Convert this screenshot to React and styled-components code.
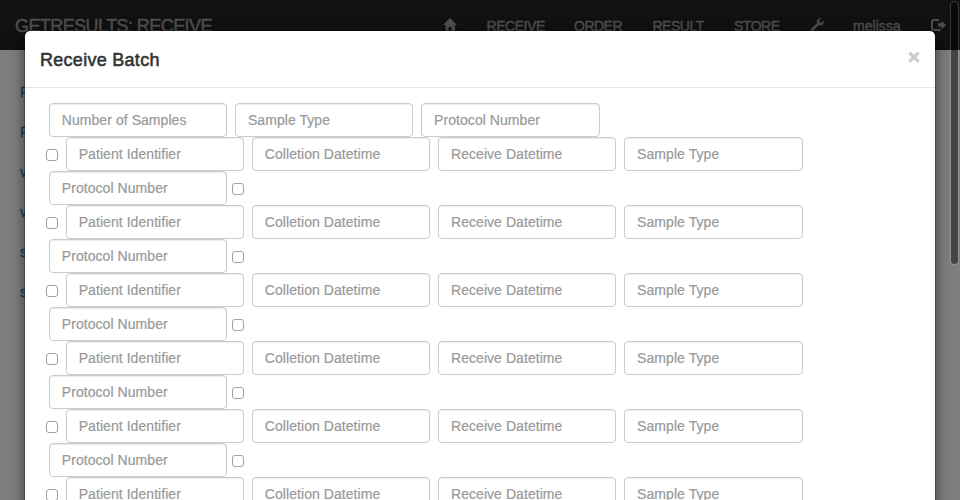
import React from "react";
import styled, { createGlobalStyle } from "styled-components";

const GlobalStyle = createGlobalStyle`
  *, *::before, *::after { box-sizing: border-box; }
  html, body { margin: 0; height: 500px; overflow: hidden; background: #fff; }
  body { font: 14px/20px "Liberation Sans", Arial, sans-serif; color: #333; }
`;

const Page = styled.div`
  position: relative;
  width: 960px;
  height: 500px;
  overflow: hidden;
`;

const Navbar = styled.nav`
  display: flex;
  justify-content: space-between;
  height: 50px;
  padding: 0 14px 0 15px;
  background: #222;
  color: #9d9d9d;
`;

const Brand = styled.span`
  padding: 16px 0 14px;
  font-size: 18px;
  letter-spacing: -0.57px;
  white-space: nowrap;
  -webkit-text-stroke: 0.45px currentColor;
`;

const NavList = styled.ul`
  display: flex;
  gap: 30px;
  margin: 0;
  padding: 0;
  list-style: none;
`;

const NavItem = styled.li`
  flex: none;
  width: ${(p) => p.$width}px;
  padding: 16px 0 14px;
  letter-spacing: ${(p) => p.$tracking || 0}px;
  white-space: nowrap;
  -webkit-text-stroke: 0.4px currentColor;

  svg {
    display: block;
    margin-top: 2px;
    overflow: visible;
  }
`;

const LinkList = styled.div`
  display: flex;
  flex-direction: column;
  gap: 20px;
  padding: 32px 20px;
  color: #337ab7;
`;

const SideLink = styled.span`
  height: 20px;
  -webkit-text-stroke: 0.4px currentColor;
`;

const Backdrop = styled.div`
  position: absolute;
  inset: 0;
  background: rgba(0, 0, 0, 0.5);
`;

const Dialog = styled.section`
  position: absolute;
  top: 30px;
  left: 24px;
  width: 912px;
  height: 900px;
  border: 1px solid rgba(0, 0, 0, 0.2);
  border-radius: 6px;
  background: #fff;
  background-clip: padding-box;
  box-shadow: 0 5px 15px rgba(0, 0, 0, 0.5);
`;

const DialogHeader = styled.header`
  display: flex;
  align-items: flex-start;
  justify-content: space-between;
  height: 57px;
  padding: 16px 15px 15px;
  border-bottom: 1px solid #e5e5e5;
`;

const Title = styled.h4`
  margin: 0;
  font-size: 18px;
  font-weight: 400;
  line-height: 26px;
  letter-spacing: 0.28px;
  -webkit-text-stroke: 0.55px currentColor;
`;

const CloseButton = styled.button`
  margin: -1px 0 0;
  padding: 0;
  border: 0;
  background: none;
  color: #000;
  font: bold 21px/21px "Liberation Sans", Arial, sans-serif;
  -webkit-text-stroke: 0.7px currentColor;
  opacity: 0.2;
`;

const DialogBody = styled.div`
  padding: 15px 15px 15px 21px;
`;

const FieldRow = styled.div`
  display: flex;
  gap: 8px;
  height: 34px;
  padding-left: ${(p) => (p.$indent ? 3.1 : 0)}px;
`;

const Input = styled.input`
  flex: none;
  width: 178.15px;
  height: 34px;
  margin: 0;
  padding: 6px 12px 6px 11.7px;
  border: 1px solid #ccc;
  border-radius: 4px;
  background: #fff;
  box-shadow: inset 0 1px 1px rgba(0, 0, 0, 0.075);
  font: 14px/20px "Liberation Sans", Arial, sans-serif;
  letter-spacing: 0.06px;
  color: #555;

  &::placeholder {
    color: #999;
    opacity: 1;
    -webkit-text-stroke: 0.2px currentColor;
  }
`;

const Checkbox = styled.input.attrs({ type: "checkbox" })`
  appearance: none;
  flex: none;
  width: 12px;
  height: 12px;
  margin: 12px 0 0 ${(p) => (p.$trailing ? -3 : 0)}px;
  border: 1px solid #a0a0a0;
  border-radius: 3px;
  background: #fff;
`;

const ScrollThumb = styled.div`
  position: absolute;
  top: 1px;
  left: 950px;
  width: 9px;
  height: 264px;
  border: 1px solid rgba(255, 255, 255, 0.16);
  border-radius: 5px;
  background: rgba(0, 0, 0, 0.46);
  background-clip: padding-box;
`;

const HomeIcon = () => (
  <svg width="14" height="14" viewBox="0 0 14 14" fill="currentColor">
    <path d="M7 0 14 7H12v5.5a.5.5 0 0 1-.5.5H8.5V9h-3v4H3a.5.5 0 0 1-.5-.5V7H0Z" />
  </svg>
);

const WrenchIcon = () => (
  <svg width="14" height="14" viewBox="0 0 14 14" fill="currentColor">
    <path d="M11.3.3 9.2 2.4l.4 2 2 .4 2.1-2.1c.7 2.5-1 4.6-3.4 4.6-.6 0-1.1-.1-1.6-.3l-5.9 6.3a1.5 1.5 0 0 1-2.1-2.1l6.3-5.9C6.1 2.7 8 0 11.3.3Z" />
  </svg>
);

const LogoutIcon = () => (
  <svg width="15" height="14" viewBox="0 0 15 14" fill="currentColor">
    <path d="M8 1H3a3 3 0 0 0-3 3v6a3 3 0 0 0 3 3h6.5v-2H3.2A1.2 1.2 0 0 1 2 9.8V4.2A1.2 1.2 0 0 1 3.2 3H8Z" />
    <path d="m10.5 2.7 4.5 4.3-4.5 4.3V8.6H7V5.3h3.5Z" />
  </svg>
);

const navigation = [
  { key: "home", content: <HomeIcon />, width: 13.5 },
  { key: "receive", content: "RECEIVE", width: 57.5, tracking: -0.45 },
  { key: "order", content: "ORDER", width: 48.5, tracking: -0.5 },
  { key: "result", content: "RESULT", width: 51.5, tracking: -0.5 },
  { key: "store", content: "STORE", width: 46, tracking: -0.5 },
  { key: "tools", content: <WrenchIcon />, width: 13 },
  { key: "user", content: "melissa", width: 48, tracking: 0.05 },
  { key: "logout", content: <LogoutIcon />, width: 15 },
];

const sideLinks = ["P", "P", "v", "v", "s", "s"];
const batchFields = ["Number of Samples", "Sample Type", "Protocol Number"];
const sampleFields = [
  "Patient Identifier",
  "Colletion Datetime",
  "Receive Datetime",
  "Sample Type",
];
const samples = [1, 2, 3, 4, 5, 6];

const SampleRows = () => (
  <>
    <FieldRow>
      <Checkbox />
      {sampleFields.map((name) => (
        <Input key={name} placeholder={name} />
      ))}
    </FieldRow>
    <FieldRow $indent>
      <Input placeholder="Protocol Number" />
      <Checkbox $trailing />
    </FieldRow>
  </>
);

export default function App() {
  return (
    <Page>
      <GlobalStyle />
      <Navbar>
        <Brand>GETRESULTS: RECEIVE</Brand>
        <NavList>
          {navigation.map((item) => (
            <NavItem key={item.key} $width={item.width} $tracking={item.tracking}>
              {item.content}
            </NavItem>
          ))}
        </NavList>
      </Navbar>
      <LinkList>
        {sideLinks.map((label, i) => (
          <SideLink key={i}>{label}</SideLink>
        ))}
      </LinkList>
      <Backdrop />
      <Dialog>
        <DialogHeader>
          <Title>Receive Batch</Title>
          <CloseButton aria-label="Close">×</CloseButton>
        </DialogHeader>
        <DialogBody>
          <FieldRow $indent>
            {batchFields.map((name) => (
              <Input key={name} placeholder={name} />
            ))}
          </FieldRow>
          {samples.map((id) => (
            <SampleRows key={id} />
          ))}
        </DialogBody>
      </Dialog>
      <ScrollThumb />
    </Page>
  );
}
